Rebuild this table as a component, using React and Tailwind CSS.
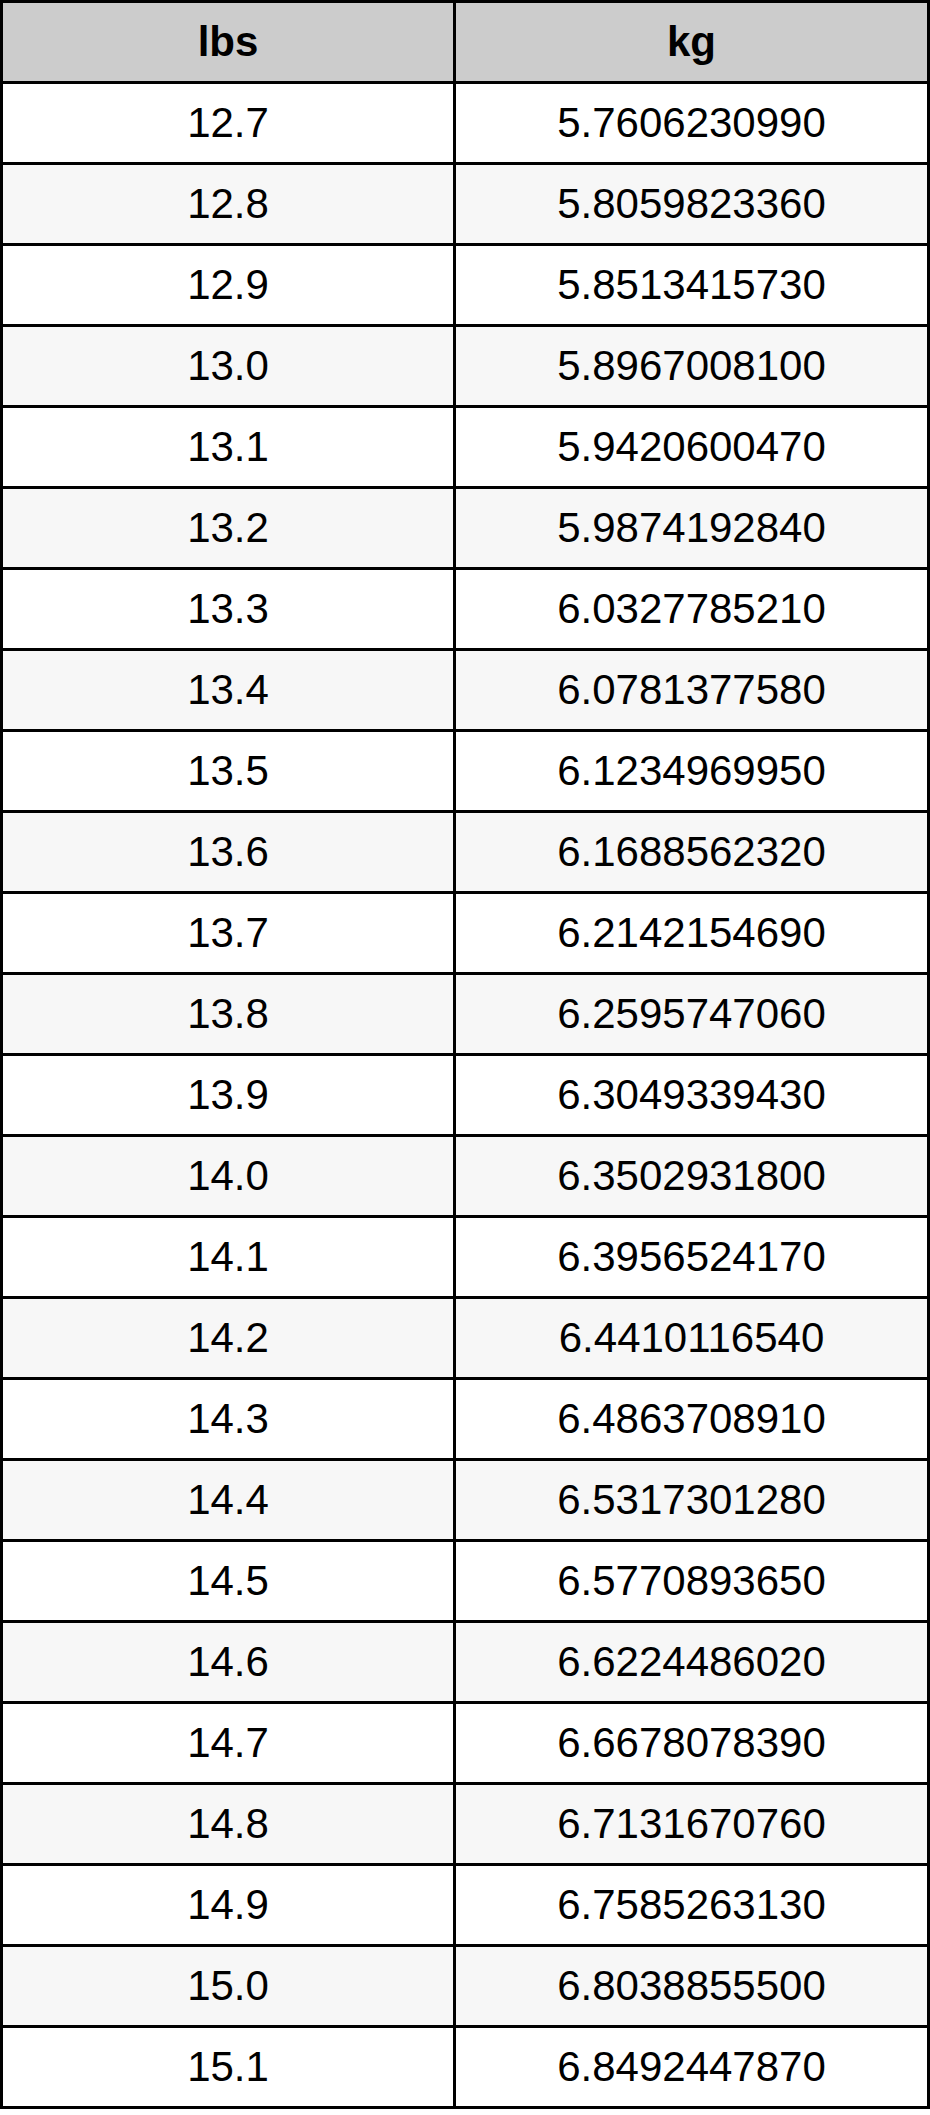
import React from "react";

const rows = [
  ["12.7", "5.7606230990"],
  ["12.8", "5.8059823360"],
  ["12.9", "5.8513415730"],
  ["13.0", "5.8967008100"],
  ["13.1", "5.9420600470"],
  ["13.2", "5.9874192840"],
  ["13.3", "6.0327785210"],
  ["13.4", "6.0781377580"],
  ["13.5", "6.1234969950"],
  ["13.6", "6.1688562320"],
  ["13.7", "6.2142154690"],
  ["13.8", "6.2595747060"],
  ["13.9", "6.3049339430"],
  ["14.0", "6.3502931800"],
  ["14.1", "6.3956524170"],
  ["14.2", "6.4410116540"],
  ["14.3", "6.4863708910"],
  ["14.4", "6.5317301280"],
  ["14.5", "6.5770893650"],
  ["14.6", "6.6224486020"],
  ["14.7", "6.6678078390"],
  ["14.8", "6.7131670760"],
  ["14.9", "6.7585263130"],
  ["15.0", "6.8038855500"],
  ["15.1", "6.8492447870"],
];

export default function App() {
  return (
    <div
      className="w-[930px] bg-white text-black"
      style={{ fontFamily: '"Liberation Sans", Arial, sans-serif' }}
    >
      <div className="border-l-[3px] border-t-[3px] border-black grid grid-cols-[453px_474px]">
        <div className="h-[81px] pb-[2px] bg-[#cccccc] border-r-[3px] border-b-[3px] border-black flex items-center justify-center text-[42px] font-bold">
          lbs
        </div>
        <div className="h-[81px] pb-[2px] bg-[#cccccc] border-r-[3px] border-b-[3px] border-black flex items-center justify-center text-[42px] font-bold">
          kg
        </div>
        {rows.map(([a, b], i) => (
          <React.Fragment key={a}>
            <div
              className={
                "h-[81px] pb-[2px] border-r-[3px] border-b-[3px] border-black flex items-center justify-center text-[42px] " +
                (i % 2 === 1 ? "bg-[#f7f7f7]" : "bg-white")
              }
            >
              {a}
            </div>
            <div
              className={
                "h-[81px] pb-[2px] border-r-[3px] border-b-[3px] border-black flex items-center justify-center text-[42px] " +
                (i % 2 === 1 ? "bg-[#f7f7f7]" : "bg-white")
              }
            >
              {b}
            </div>
          </React.Fragment>
        ))}
      </div>
    </div>
  );
}
